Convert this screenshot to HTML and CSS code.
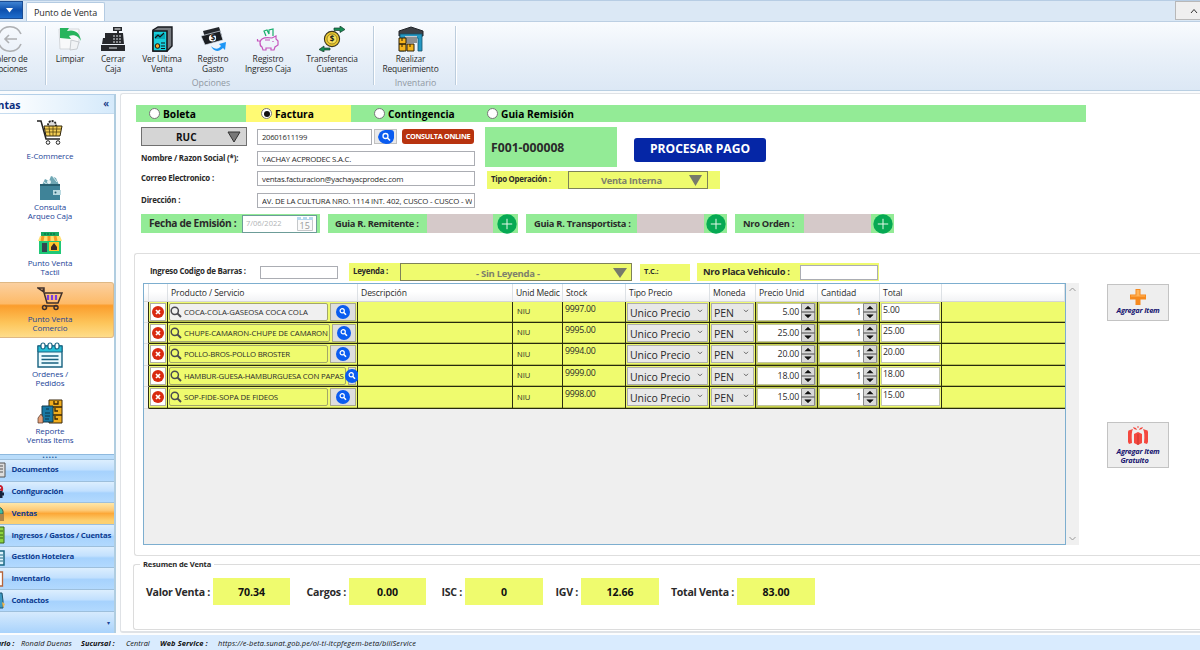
FILE: index.html
```html
<!DOCTYPE html>
<html lang="es">
<head>
<meta charset="utf-8">
<title>Punto de Venta</title>
<link rel="stylesheet" href="styles.css">
</head>
<body>
<svg class="defs" width="0" height="0">
  <symbol id="lens" viewBox="0 0 14 14"><circle cx="7" cy="7" r="7" fill="#0a5cf0"/><circle cx="6.2" cy="5.8" r="2.1" fill="none" stroke="#fff" stroke-width="1.2"/><path d="M7.8 7.4L10 9.8" stroke="#fff" stroke-width="1.5"/></symbol>
  <symbol id="del" viewBox="0 0 12 12"><circle cx="6" cy="6" r="6" fill="#d92a10"/><path d="M4 4l4 4M8 4l-4 4" stroke="#fff" stroke-width="1.7"/></symbol>
  <symbol id="find" viewBox="0 0 12 12"><circle cx="4.8" cy="4.8" r="3.6" fill="none" stroke="#4a4a50" stroke-width="1.5"/><path d="M7.4 7.4L11 11" stroke="#4a4a50" stroke-width="2"/></symbol>
  <symbol id="plus" viewBox="0 0 20 20"><circle cx="10" cy="10" r="9.7" fill="#06a953"/><path d="M10 4.8v10.4M4.8 10h10.4" stroke="#e4f8ea" stroke-width="1"/></symbol>
  <symbol id="spin" viewBox="0 0 14 18"><path d="M.5.5h13v17H.5z" fill="#d9d9d9" stroke="#8a8a8a"/><path d="M0 9h14" stroke="#707070" stroke-width="1.4"/><path d="M3.8 6.2L7 3.2l3.2 3M3.8 11.8L7 14.8l3.2-3z" fill="#111" stroke="#111" stroke-width=".6"/></symbol>
  <symbol id="chev" viewBox="0 0 6 4"><path d="M1 .8l2 2 2-2" fill="none" stroke="#555" stroke-width=".9"/></symbol>
</svg>

<header class="tabs">
  <div class="app"><svg width="7" height="5"><path d="M0 0h7L3.5 4.5z" fill="#fff"/></svg></div>
  <div class="tab">Punto de Venta</div>
  <div class="fold"><svg width="8" height="6" viewBox="0 0 8 6"><path d="M1 5l3-3.5L7 5" fill="none" stroke="#333"/></svg></div>
</header>

<nav class="ribbon">
  <section class="grp g0">
    <div class="tool t0"><svg width="26" height="26" viewBox="0 0 26 26" fill="none" stroke="#aeb0b3" stroke-width="1.6"><path d="M2 8a12 12 0 0 1 22 0M2 18a12 12 0 0 0 22 0M20 13H8M12 9l-4 4 4 4"/></svg><span>Tablero de<br><em>Opciones</em></span></div>
  </section>
  <section class="grp g1">
    <div class="tools">
      <div class="tool w46"><svg width="26" height="26" viewBox="0 0 26 26"><path d="M2 3h20v14l-5 6H3z" fill="#f8f9fa" stroke="#d5d8dc"/><path d="M14 14l8 2-2 7-7 1z" fill="#f1f3f5" stroke="#c8ccd0"/><path d="M3 2l9 0-2 3c7-2 13 1 14 10-2-4-6-7-12-5l2 3-11-1z" fill="#27b45c"/></svg><span>Limpiar</span></div>
      <div class="tool w40"><svg width="26" height="26" viewBox="0 0 26 26" fill="#26282c"><path d="M1 19h24v6H1zM3 12h7v-5h13l1 11H2z"/><path d="M13 1h9v4h-9zM17 5h2v3h-2zM5 7h5v6H5z"/><path d="M14.500 3h6" stroke="#fff"/><path d="M13 10h9M13 13h9M13 16h9" stroke="#e0e4e8" stroke-dasharray="2 1"/><path d="M9 22h8" stroke="#e0e4e8"/></svg><span>Cerrar<br>Caja</span></div>
      <div class="tool w58"><svg width="26" height="26" viewBox="0 0 26 26"><path d="M4 4l5-3h14v19l-5 5H4z" fill="#777b80" stroke="#16181c" stroke-width="1.4"/><path d="M4 5h14v20H4z" fill="#17cfdc" stroke="#16181c" stroke-width="1.6"/><path d="M6 8h10v5H6z" fill="#0ba7b6"/><path d="M6 12l3-3 2 2 4-4M12 17h4M12 20h4M12 22.500h4" fill="none" stroke="#111" stroke-width="1.2"/><circle cx="8.500" cy="20" r="2.300" fill="#f5a623" stroke="#111"/></svg><span>Ver Ultima<br>Venta</span></div>
      <div class="tool w44"><svg width="26" height="26" viewBox="0 0 26 26"><path d="M3 5l16-4 3 9-16 5z" fill="#24272c"/><path d="M1 10l19-5 3 9-18 5z" fill="#1b1d21" stroke="#dfe9f3" stroke-width=".7"/><circle cx="12.500" cy="12" r="3.600" fill="#fff"/><text x="10.700" y="15" class="coin">$</text><path d="M11 20c4 4 8 3 10 0l-2-2 7-2-1 8-2-2c-5 5-10 3-12-2z" fill="#1e96f5"/></svg><span>Registro<br>Gasto</span></div>
      <div class="tool w66"><svg width="26" height="26" viewBox="0 0 26 26" fill="none" stroke="#c655bd" stroke-width="1.2"><path d="M5 16c1-4 6-5 12-4l4-2v3l2 2v4l-3 2-1 3h-3v-2H11v2H8l-1-3c-2-1-2-2-2-5zM5 15H2.500v-2M10 14h5M18 15v1"/><path d="M11 10L9 5l3-1 2 4 0-4 4-1 0 7" stroke="#18ae6c"/></svg><span>Registro<br>Ingreso Caja</span></div>
      <div class="tool w62"><svg width="26" height="26" viewBox="0 0 26 26"><circle cx="13" cy="13" r="7.600" fill="#e9c72f" stroke="#3a3520" stroke-width="1.100"/><circle cx="13" cy="13" r="5" fill="#f9df57" stroke="#776419" stroke-width=".7"/><text x="10.800" y="16" class="coin">$</text><path d="M15 2h6V0l5 3.500-5 3V4.500h-6zM11 22H5v-2l-5 3.500 5 2.500v-2h6z" fill="#168c54" stroke="#193c2b" stroke-width=".7"/></svg><span>Transferencia<br>Cuentas</span></div>
    </div>
    <p class="cap">Opciones</p>
  </section>
  <section class="grp g2">
    <div class="tools"><div class="tool w72"><svg width="26" height="26" viewBox="0 0 26 26"><path d="M1 5l12-4 12 4v5H1z" fill="#3d4147" stroke="#202327"/><path d="M2 8h22v17h-4V12H6v13H2z" fill="#2497c2" stroke="#15506a" stroke-width=".8"/><path d="M7 10h12v7H7z" fill="#c6ccd0"/><path d="M7 12h12M7 14h12M7 16h12" stroke="#555"/><path d="M1 12h7v6H1zM1 18h7v7H1zM9 18h7v7H9z" fill="#f6b51d" stroke="#2b210b"/><path d="M4 12v3M4 18v3M12 18v3" stroke="#2b210b"/></svg><span>Realizar<br>Requerimiento</span></div></div>
    <p class="cap">Inventario</p>
  </section>
</nav>

<div class="body">
  <aside class="side">
    <h2 class="shead"><span>Ventas</span><b>«</b></h2>
    <div class="mods">
      <a class="mod m1"><svg width="26" height="26" viewBox="0 0 26 26"><circle cx="15" cy="6" r="4" fill="#ddd" stroke="#222" stroke-width="1.800" stroke-dasharray="2 1"/><path d="M7 7h18l-2 10H9z" fill="#f4ce55" stroke="#30260d"/><path d="M8 10h16M9 13h15M12 7l1 10M16 7v10M20 7l-1 10" stroke="#55440f" stroke-width=".8"/><path d="M0 2h4l5 18h14" fill="none" stroke="#222" stroke-width="1.500"/><circle cx="11" cy="23.500" r="1.800" fill="#fff" stroke="#222"/><circle cx="21" cy="23.500" r="1.800" fill="#fff" stroke="#222"/></svg><span>E-Commerce</span></a>
      <a class="mod m2"><svg width="26" height="26" viewBox="0 0 26 26"><path d="M5 10l3-6 4 2 2-5 5 2 3 7z" fill="#6fa7b4"/><circle cx="12" cy="7" r="2" fill="#e7f2f4"/><path d="M16 2l4 5M7 7l4 3" stroke="#d9eef2"/><path d="M3 10h20v15H3z" fill="#3f8398"/><path d="M3 10h20" stroke="#275f70" stroke-width="2"/><path d="M16 15h8v5h-8z" fill="#b9d9e0"/><circle cx="18.500" cy="17.500" r="1" fill="#275f70"/></svg><span>Consulta<br>Arqueo Caja</span></a>
      <a class="mod m3"><svg width="24" height="24" viewBox="0 0 24 24"><path d="M1 9h22v14H1z" fill="#1fc877"/><path d="M3 1h18v4H3z" fill="#17a861"/><path d="M6 3h12" stroke="#0a5d36" stroke-dasharray="2 1"/><path d="M2 5h20l2 5H0z" fill="#ffdf70"/><path d="M5 5l-1 5M11 5v5M17 5l1 5" stroke="#f59a23" stroke-width="3"/><path d="M4 12h5v9H4z" fill="#33474f"/><path d="M11 11h10v9H11z" fill="#ffc82c"/><path d="M13 19v-3l3-4 3 4v3z" fill="#3a2b2b"/></svg><span>Punto Venta<br>Tactil</span></a>
      <a class="mod m4"><svg width="26" height="26" viewBox="0 0 26 26" fill="none" stroke="#40302b" stroke-width="1.500"><path d="M1 2h6v4L1 2zM6 3l4 14h11l4-10H8"/><path d="M11 9v5M15 9v5M19 9v5" stroke="#7a3ce0" stroke-width="2.200"/><path d="M8 20h12"/><circle cx="7.500" cy="21.500" r="2"/><circle cx="19" cy="21.500" r="2"/></svg><span>Punto Venta<br>Comercio</span></a>
      <a class="mod m5"><svg width="26" height="26" viewBox="0 0 26 26"><path d="M1 4h24v21H1z" fill="#eafbff" stroke="#176280" stroke-width="1.400"/><path d="M1 4h24v6H1z" fill="#26c0d8" stroke="#176280"/><path d="M4.500 14h17M4.500 17.500h17M4.500 21h17" stroke="#176280" stroke-width="1.400"/><g fill="#fff" stroke="#176280" stroke-width="1.200"><rect x="4" y="1" width="4" height="6" rx="2"/><rect x="11" y="1" width="4" height="6" rx="2"/><rect x="18" y="1" width="4" height="6" rx="2"/></g></svg><span>Ordenes /<br>Pedidos</span></a>
      <a class="mod m6"><svg width="26" height="26" viewBox="0 0 26 26"><path d="M12 1h13v23H12z" fill="#f2ae1c" stroke="#38270a"/><path d="M12 8h13M12 16h13M17 2v3h4V2M18 9v3h3M18 17v3h3" fill="none" stroke="#38270a" stroke-width="1.300"/><path d="M5 7h11v16H5z" fill="#1879a5" stroke="#123a4d"/><path d="M8 14h5M8 17h5M8 20h4M9 10h3" stroke="#0c3345"/><path d="M1 19l3-4 2 3v6H1z" fill="#e5a079" stroke="#4b3022" stroke-width=".7"/></svg><span>Reporte<br>Ventas Items</span></a>
    </div>
    <div class="grip">·····</div>
    <ul class="nav">
      <li><svg width="6" height="16"><path d="M-2 1h7v14h-7z" fill="#ddd" stroke="#555"/><path d="M0 4h3M0 7h3M0 10h3" stroke="#555"/></svg>Documentos</li>
      <li><svg width="6" height="16"><path d="M-3 3q6-3 5 3l-5-1" fill="none" stroke="#c8202e" stroke-width="2"/><path d="M-1 10h5M1 7v7" stroke="#17233b" stroke-width="3"/></svg>Configuración</li>
      <li class="on"><svg width="6" height="16"><path d="M-2 1q6 1 5 7h-5z" fill="#42bda4" stroke="#365b52"/><path d="M-1 8h5v7h-5z" fill="#ad854b"/></svg>Ventas</li>
      <li><svg width="6" height="18"><path d="M-2 1h6v16h-6z" fill="#8dd33f" stroke="#37621d"/><path d="M0 5h3M0 9h3M0 12h3" stroke="#37621d"/></svg>Ingresos / Gastos / Cuentas</li>
      <li><svg width="6" height="17"><path d="M-2 2h6v14h-6z" fill="#dff3fb" stroke="#196783" stroke-width="1.500"/><path d="M0 6h3M0 9h3M0 12h3" stroke="#196783"/></svg>Gestión Hotelera</li>
      <li><svg width="6" height="16"><path d="M-3 1h5.500v14H-3z" fill="#fff" stroke="#b6643a" stroke-width="1.300"/></svg>Inventario</li>
      <li><svg width="6" height="17"><path d="M-2 1h4l1 8v7h-5z" fill="#3e9ac2" stroke="#1d536c"/><path d="M2 10l3 2-2 4" fill="#f2b84b"/></svg>Contactos</li>
    </ul>
    <div class="more">▾</div>
  </aside>

  <main class="main">
    <div class="types">
      <label class="ty a"><i></i>Boleta</label><label class="ty b on"><i></i>Factura</label><label class="ty c"><i></i>Contingencia</label><label class="ty d"><i></i>Guia Remisión</label>
    </div>

    <div class="form">
      <div class="client">
        <div class="r1">
          <div class="ruc"><span>RUC</span><svg width="14" height="12" viewBox="0 0 14 12"><path d="M1 1h12L7 11z" fill="#777" stroke="#333"/></svg></div>
          <div class="in num">20601611199</div>
          <div class="lbtn"><svg width="16" height="14" viewBox="0 0 16 14"><path d="M7 0h6q3 0 3 3v5q-1 6-8 6-7-1-8-7 1-6 7-7z" fill="#0a5cf0"/><circle cx="7.500" cy="6" r="2.500" fill="none" stroke="#fff" stroke-width="1.300"/><path d="M9.500 8l2.500 2.500" stroke="#fff" stroke-width="1.600"/></svg></div>
          <div class="online">CONSULTA ONLINE</div>
        </div>
        <div class="rf f2"><b>Nombre / Razon Social (*):</b><div class="in nom">YACHAY ACPRODEC S.A.C.</div></div>
        <div class="rf f3"><b>Correo Electronico :</b><div class="in cor">ventas.facturacion@yachayacprodec.com</div></div>
        <div class="rf f4"><b>Dirección :</b><div class="in dir"><p>AV. DE LA CULTURA NRO. 1114 INT. 402, CUSCO - CUSCO - WANCHAQ</p></div></div>
      </div>
      <div class="doc">
        <div class="dtop"><div class="serie">F001-000008</div><div class="pay">PROCESAR PAGO</div></div>
        <div class="oper"><b>Tipo Operación :</b><div class="combo"><span>Venta Interna</span><svg width="13" height="11"><path d="M0 0h13L6.500 11z" fill="#777b6b"/></svg></div></div>
      </div>
    </div>

    <div class="guides">
      <div class="gd e1"><b>Fecha de Emisión :</b><div class="date"><span>7/06/2022</span><svg width="16" height="15" viewBox="0 0 16 15"><path d="M.5 2.500h15v12H.5z" fill="#fafafa" stroke="#c5c8ca"/><path d="M0 1h16v3H0z" fill="#b5d8ee"/><path d="M5 0v3M11 0v3" stroke="#fff" stroke-width="2"/><text x="2.500" y="13" class="day">15</text></svg></div></div>
      <div class="gd e2"><b>Guia R. Remitente :</b><i></i><svg width="20" height="20"><use href="#plus"/></svg></div>
      <div class="gd e3"><b>Guia R. Transportista :</b><i></i><svg width="20" height="20"><use href="#plus"/></svg></div>
      <div class="gd e4"><b>Nro Orden :</b><i></i><svg width="20" height="20"><use href="#plus"/></svg></div>
    </div>

    <section class="items">
      <div class="left">
        <div class="opts">
          <b class="bar">Ingreso Codigo de Barras :</b><div class="in bin"></div>
          <div class="ley"><b>Leyenda :</b><div class="combo"><span>- Sin Leyenda -</span><svg width="14" height="10"><path d="M0 0h14L7 10z" fill="#777b6b"/></svg></div></div>
          <div class="tc">T.C.:</div>
          <div class="placa"><b>Nro Placa Vehiculo :</b><div class="in"></div></div>
        </div>
        <div class="tw">
          <div class="table">
            <div class="tr th"><div></div><div></div><div>Producto / Servicio</div><div>Descripción</div><div class="um">Unid Medic</div><div>Stock</div><div>Tipo Precio</div><div>Moneda</div><div>Precio Unid</div><div>Cantidad</div><div>Total</div><div></div></div>
            <div class="tr"><div class="rh"></div><div class="x"><i><svg width="12" height="12"><use href="#del"/></svg></i></div><div class="pr"><p class="off"><svg width="12" height="12"><use href="#find"/></svg><span class="s1">COCA-COLA-GASEOSA COCA COLA</span></p><i><svg width="14" height="14"><use href="#lens"/></svg></i></div><div></div><div class="ni">NIU</div><div class="st">9997.00</div><div class="sel"><i>Unico Precio<svg width="6" height="4"><use href="#chev"/></svg></i></div><div class="sel"><i>PEN<svg width="6" height="4"><use href="#chev"/></svg></i></div><div class="sp"><i>5.00<svg width="14" height="18"><use href="#spin"/></svg></i></div><div class="sp"><i>1<svg width="14" height="18"><use href="#spin"/></svg></i></div><div class="to"><i>5.00</i></div><div></div></div>
            <div class="tr"><div class="rh"></div><div class="x"><i><svg width="12" height="12"><use href="#del"/></svg></i></div><div class="pr wide"><p><svg width="12" height="12"><use href="#find"/></svg><span class="s2">CHUPE-CAMARON-CHUPE DE CAMARON</span></p><i><svg width="14" height="14"><use href="#lens"/></svg></i></div><div></div><div class="ni">NIU</div><div class="st">9995.00</div><div class="sel"><i>Unico Precio<svg width="6" height="4"><use href="#chev"/></svg></i></div><div class="sel"><i>PEN<svg width="6" height="4"><use href="#chev"/></svg></i></div><div class="sp"><i>25.00<svg width="14" height="18"><use href="#spin"/></svg></i></div><div class="sp"><i>1<svg width="14" height="18"><use href="#spin"/></svg></i></div><div class="to"><i>25.00</i></div><div></div></div>
            <div class="tr t"><div class="rh"></div><div class="x"><i><svg width="12" height="12"><use href="#del"/></svg></i></div><div class="pr"><p><svg width="12" height="12"><use href="#find"/></svg><span class="s3">POLLO-BROS-POLLO BROSTER</span></p><i><svg width="14" height="14"><use href="#lens"/></svg></i></div><div></div><div class="ni">NIU</div><div class="st">9994.00</div><div class="sel"><i>Unico Precio<svg width="6" height="4"><use href="#chev"/></svg></i></div><div class="sel"><i>PEN<svg width="6" height="4"><use href="#chev"/></svg></i></div><div class="sp"><i>20.00<svg width="14" height="18"><use href="#spin"/></svg></i></div><div class="sp"><i>1<svg width="14" height="18"><use href="#spin"/></svg></i></div><div class="to"><i>20.00</i></div><div></div></div>
            <div class="tr"><div class="rh"></div><div class="x"><i><svg width="12" height="12"><use href="#del"/></svg></i></div><div class="pr full"><p><svg width="12" height="12"><use href="#find"/></svg><span class="s4">HAMBUR-GUESA-HAMBURGUESA CON PAPAS</span></p><i><svg width="14" height="14"><use href="#lens"/></svg></i></div><div></div><div class="ni">NIU</div><div class="st">9999.00</div><div class="sel"><i>Unico Precio<svg width="6" height="4"><use href="#chev"/></svg></i></div><div class="sel"><i>PEN<svg width="6" height="4"><use href="#chev"/></svg></i></div><div class="sp"><i>18.00<svg width="14" height="18"><use href="#spin"/></svg></i></div><div class="sp"><i>1<svg width="14" height="18"><use href="#spin"/></svg></i></div><div class="to"><i>18.00</i></div><div></div></div>
            <div class="tr t"><div class="rh"></div><div class="x"><i><svg width="12" height="12"><use href="#del"/></svg></i></div><div class="pr"><p><svg width="12" height="12"><use href="#find"/></svg><span class="s5">SOP-FIDE-SOPA DE FIDEOS</span></p><i><svg width="14" height="14"><use href="#lens"/></svg></i></div><div></div><div class="ni">NIU</div><div class="st">9998.00</div><div class="sel"><i>Unico Precio<svg width="6" height="4"><use href="#chev"/></svg></i></div><div class="sel"><i>PEN<svg width="6" height="4"><use href="#chev"/></svg></i></div><div class="sp"><i>15.00<svg width="14" height="18"><use href="#spin"/></svg></i></div><div class="sp"><i>1<svg width="14" height="18"><use href="#spin"/></svg></i></div><div class="to"><i>15.00</i></div><div></div></div>
          </div>
          <div class="scroll"><svg width="7" height="5"><path d="M.5 4l3-3 3 3" fill="none" stroke="#999"/></svg><svg width="7" height="5"><path d="M.5 1l3 3 3-3" fill="none" stroke="#999"/></svg></div>
        </div>
      </div>
      <div class="acts">
        <div class="act a1"><svg width="16" height="16"><path d="M5.500 0h5v5.500H16v5h-5.500V16h-5v-5.500H0v-5h5.500z" fill="#f68a1e"/><path d="M6.500 1h3v5.500H15v1H1v-1h5.500z" fill="#ffb45a"/></svg><span>Agregar Item</span></div>
        <div class="act a2"><svg width="20" height="20" viewBox="0 0 20 20" fill="#f4483f"><path d="M0 6q0-2 2-2l3-1q-2 3-1 14l-3 1-1-2zM20 6q0-2-2-2l-3-1q2 3 1 14l3 1 1-2zM6 8l4-2 4 2v9l-4 2-4-2z"/><path d="M9 4L6 3l-1-2 3 1zM11 4l3-1 1-2-3 1zM9.500 0h1v2h-1z"/><path d="M10 8v11" stroke="#c8372f"/></svg><span>Agregar Item<br><em>Gratuito</em></span></div>
      </div>
    </section>

    <section class="sum">
      <h3>Resumen de Venta</h3>
      <div class="vals"><b>Valor Venta :</b><i>70.34</i><b>Cargos :</b><i>0.00</i><b>ISC :</b><i>0</i><b>IGV :</b><i>12.66</i><b>Total Venta :</b><i>83.00</i></div>
    </section>
  </main>
</div>

<footer class="status"><b class="u0">Usuario :</b><span class="u1">Ronald Duenas</span><b class="u2">Sucursal :</b><span class="u3">Central</span><b class="u4">Web Service :</b><span class="u5">https://e-beta.sunat.gob.pe/ol-ti-itcpfegem-beta/billService</span></footer>
</body>
</html>
```
FILE: styles.css
```css
* { box-sizing: border-box; margin: 0; padding: 0; }
body { width: 1200px; height: 650px; overflow: hidden; background: #fcfdfe; font-family: "Open Sans", "Noto Sans", sans-serif; font-size: 8px; line-height: 1; color: #2a2a2a; display: flex; flex-direction: column; }
i { font-style: normal; }
em { font-style: inherit; }
svg { display: block; flex: none; }
.defs { position: absolute; }
b, span { white-space: nowrap; }
.coin { font: bold 8px "Open Sans"; fill: #222; }
.day { font: 9px "Open Sans"; fill: #999; }

.tabs { height: 21px; flex: none; background: #dbe8f5; border-top: 1px solid #b7cde4; display: flex; }
.app { width: 23px; height: 18px; background: linear-gradient(#3f83d2, #0d50ae 50%, #1f6dcc); border: 1px solid #1b4d94; border-left: 0; display: flex; align-items: center; padding-left: 6px; }
.tab { margin: 1px 0 0 3px; width: 79px; height: 20px; background: #fff; border: 1px solid #b4cbe2; border-bottom: 0; border-radius: 2px 2px 0 0; text-align: center; padding-top: 5px; font-size: 9px; letter-spacing: -.1px; }
.fold { margin-left: auto; width: 25px; height: 19px; background: #efefef; border: 1px solid #b8b8b8; border-right: 0; display: flex; align-items: center; padding-left: 14px; }

.ribbon { height: 70px; flex: none; border-top: 1px solid #bccfe3; border-bottom: 1px solid #b9cfe2; background: linear-gradient(#f9fbfe, #eaf1f9 45%, #dce8f5); display: flex; padding-top: 4px; }
.grp { height: 59px; border-right: 1px solid #bccddd; box-shadow: 1px 0 #fff; }
.g0 { width: 46px; }
.g1 { width: 328px; padding-left: 1px; }
.g2 { width: 82px; }
.tools { display: flex; height: 51px; }
.g2 .tools { justify-content: center; padding-right: 8px; }
.tool { display: flex; flex-direction: column; align-items: center; text-align: center; }
.tool span { font-size: 8.400px; line-height: 10px; margin-top: 2px; letter-spacing: -.15px; }
.t0 { width: 60px; margin-left: -20px; }
.t0 span { margin-right: 5px; }
.t0 em { padding-left: 4px; }
.w46 { width: 46px; } .w40 { width: 40px; } .w58 { width: 58px; } .w44 { width: 44px; } .w66 { width: 66px; } .w62 { width: 62px; } .w72 { width: 72px; }
.cap { text-align: center; color: #9098a2; font-size: 8.800px; padding: 2px 0 0 2px; }

.body { height: 542px; flex: none; display: flex; background: #f9fbfd; }
.side { width: 116px; margin-top: 3px; height: 539px; border-right: 2px solid #b0cde0; border-top: 1px solid #b3cfe8; background: #fff; display: flex; flex-direction: column; }
.shead { height: 19px; flex: none; background: linear-gradient(90deg, #fff, #d5eafb); border-bottom: 1px solid #c6dcef; display: flex; justify-content: space-between; padding: 5px 5px 0 0; font-size: 10.500px; color: #0b2f80; overflow: hidden; }
.shead span { margin-left: -15.500px; }
.shead b { margin-top: -2px; font-weight: 600; }
.mods { height: 340px; overflow: hidden; }
.mod { display: flex; flex-direction: column; align-items: center; text-align: center; color: #1c4498; padding-right: 14px; }
.mod span { font-size: 8px; line-height: 9.300px; letter-spacing: -.1px; }
.m1 { height: 61px; padding-top: 5px; } .m1 span { margin-top: 6px; }
.m2 { height: 53px; } .m2 span { margin-top: 1px; }
.m3 { height: 54px; padding-top: 3px; } .m3 span { margin-top: 3px; }
.m4 { height: 56px; padding-top: 3px; background: linear-gradient(#fbd0a0, #fdba68 38%, #fb9d2c 42%, #fdc65c 75%, #fedd8a); border: 1px solid #dfb884; border-left: 0; border-radius: 0 3px 3px 0; padding-right: 13px; }
.m4 span { margin-top: 2px; }
.m5 { height: 57px; padding-top: 4px; } .m5 span { margin-top: 1px; }
.m6 { padding-top: 4px; } .m6 span { margin-top: 1px; }
.grip { height: 5px; flex: none; background: #b9dcfa; border-top: 1px solid #8eb9de; color: #28609f; font-weight: bold; font-size: 9px; line-height: 3px; letter-spacing: .5px; text-align: center; padding-right: 14px; }
.nav { list-style: none; }
.nav li { height: 21.700px; border-top: 1px solid #9dbfdc; background: linear-gradient(#dceefe, #c2e0fe 45%, #a6d2fd 55%, #b2d9fe); display: flex; align-items: center; color: #0d3c91; font-weight: bold; font-size: 7.800px; letter-spacing: -.22px; white-space: nowrap; }
.nav svg { margin-right: 5.500px; overflow: hidden; }
.nav .on { background: linear-gradient(#fee7a9, #fdc975 35%, #fca838 50%, #fdd070 85%); }
.more { flex: 1; border-top: 1px solid #9dbfdc; background: linear-gradient(#d6eafd, #a9d3fc); color: #1c4498; font-size: 6px; text-align: right; padding: 8px 4px 0 0; }

.main { width: 1080px; margin: 2px 0 0 4px; height: 540px; border: 1px solid #dfe2e6; border-width: 1px 0 2px 1px; border-radius: 3px 0 0 3px; background: #fff; padding-top: 11px; flex: none; }
.types { margin-left: 15px; width: 950px; height: 17px; background: #93eb96; display: flex; }
.ty { display: flex; align-items: center; color: #000; font-weight: bold; font-size: 10.200px; gap: 3px; white-space: nowrap; padding-top: 1px; }
.ty i { width: 11px; height: 11px; margin-top: -1px; border: 1px solid #777; border-radius: 50%; background: #fff; display: grid; place-items: center; }
.ty.on i::after { content: ""; width: 6px; height: 6px; border-radius: 50%; background: #111; }
.ty.a { width: 110px; padding-left: 13px; }
.ty.b { width: 105px; padding-left: 15px; background: #fffa73; }
.ty.c { width: 113px; padding-left: 23px; }
.ty.d { padding-left: 23px; }

.form { margin: 5px 0 0 20px; display: flex; height: 81px; }
.client { width: 344px; }
.in { background: #fff; border: 1px solid #abadb3; white-space: nowrap; overflow: hidden; font-size: 7.800px; padding: 4px 0 0 4px; }
.r1 { display: flex; height: 19px; align-items: center; }
.ruc { width: 106px; height: 19px; border: 1px solid #707070; background: #d5d5d5; display: flex; align-items: center; padding: 0 5px 0 34px; justify-content: space-between; font-weight: bold; font-size: 10px; color: #111; }
.num { width: 115px; height: 16px; margin-left: 10px; font-size: 7.600px; letter-spacing: -.25px; }
.lbtn { width: 23px; height: 15px; margin-left: 2px; border: 1px solid #c0c0c0; background: #e9e9e9; display: grid; place-items: center; }
.online { margin-left: 5px; width: 72px; height: 15px; border-radius: 3px; background: #b8330f; color: #fff; font-weight: bold; font-size: 7.300px; letter-spacing: -.33px; display: grid; place-items: center; white-space: nowrap; }
.rf { display: flex; height: 15px; align-items: center; margin-top: 5px; }
.rf b { width: 116px; font-size: 7.900px; letter-spacing: -.2px; }
.rf .in { width: 218px; height: 15px; padding-left: 4px; }
.f4 { margin-top: 7px; }
.nom { letter-spacing: -.22px; }
.cor { letter-spacing: -.24px; }
.rf .dir { letter-spacing: -.17px; padding-right: 2px; }
.dir p { overflow: hidden; height: 9px; margin-top: -1px; padding-top: 1px; }
.dtop { display: flex; height: 40px; align-items: center; }
.serie { width: 132px; height: 40px; background: #93eb96; font-weight: bold; font-size: 12.200px; display: flex; align-items: center; padding: 3px 0 0 6px; }
.pay { margin: 5px 0 0 17px; width: 132px; height: 24px; border-radius: 3px; background: #0526a6; color: #fff; font-weight: bold; font-size: 12.100px; display: grid; place-items: center; white-space: nowrap; }
.oper { margin: 4px 0 0 2px; width: 233px; height: 18px; background: #effb6e; display: flex; }
.oper b { width: 81px; padding: 5px 0 0 4px; font-size: 7.900px; letter-spacing: -.27px; }
.combo { border: 1.500px solid #7e8258; display: flex; align-items: center; color: #7d806c; font-weight: bold; font-size: 9.300px; letter-spacing: -.28px; background: #effb6e; }
.combo span { padding-top: 2px; }
.oper .combo { width: 140px; padding: 0 5px 0 32px; justify-content: space-between; }

.guides { display: flex; margin: 6px 0 0 20px; height: 19px; }
.gd { background: #93eb96; display: flex; align-items: center; height: 19px; font-size: 9.300px; letter-spacing: -.27px; }
.gd > i { background: #d5c9c9; height: 19px; }
.gd > svg { margin-left: auto; margin-right: 1px; }
.e1 { width: 179px; padding-left: 8px; font-size: 10.200px; letter-spacing: -.32px; }
.e1 b { width: 93px; }
.date { width: 75px; height: 18px; background: #fff; border: 1px solid #6c9c98; display: flex; justify-content: space-between; align-items: center; padding: 0 3px; color: #b0b3b5; font-size: 7.500px; letter-spacing: 0; }
.e2 { width: 190px; margin-left: 8px; padding-left: 7px; } .e2 b { width: 92px; } .e2 i { width: 66px; }
.e3 { width: 201px; margin-left: 8px; padding-left: 8px; } .e3 b { width: 103px; } .e3 i { width: 67px; }
.e4 { width: 159px; margin-left: 8px; padding-left: 8px; } .e4 b { width: 61px; } .e4 i { width: 67px; }

.items { margin: 20px 0 0 13px; height: 303px; border: 1px solid #dedede; border-width: 1px 0 1px 1px; border-radius: 3px 0 0 3px; display: flex; }
.left { width: 945px; padding: 9px 0 0 7px; }
.opts { display: flex; height: 18px; align-items: center; margin-left: 8px; }
.bar { width: 110px; font-size: 7.900px; letter-spacing: -.24px; }
.bin { width: 78px; height: 13px; margin-top: 1px; }
.ley { margin-left: 11px; width: 283px; height: 18px; background: #effb6e; display: flex; align-items: center; }
.ley b { width: 51px; padding-left: 4px; font-size: 7.900px; letter-spacing: -.28px; }
.ley .combo { width: 232px; height: 18px; padding: 1px 4px 0 75px; justify-content: space-between; font-size: 9.500px; }
.tc { margin-left: 8px; width: 50px; height: 17px; background: #effb6e; font-weight: bold; font-size: 7.500px; padding: 4px 0 0 4px; letter-spacing: -.2px; }
.placa { margin-left: 7px; width: 182px; height: 18px; background: #effb6e; display: flex; align-items: center; padding-left: 6px; font-size: 9.300px; letter-spacing: -.27px; }
.placa b { width: 97px; }
.placa .in { width: 78px; height: 15px; }
.tw { display: flex; margin: 2px 0 0 1px; height: 262px; }
.table { width: 923px; border: 1px solid #7daecf; background: #efefef; }
.scroll { width: 13px; background: #f0f0f0; display: flex; flex-direction: column; justify-content: space-between; align-items: center; padding: 4px 0; }
.tr { display: grid; grid-template-columns: 5px 19px 190px 155px 50px 63px 84px 46px 62px 62px 62px 1fr; grid-template-rows: 100%; height: 21px; }
.tr.t { height: 22px; }
.tr > div { border-right: 1px solid #2b2e12; border-bottom: 1px solid #26290e; box-shadow: inset 0 -1px rgba(60, 64, 10, .3); background: #effb6e; display: flex; min-width: 0; }
.tr > div:last-child { border-right: 0; }
.tr > .rh { background: #f4f4f4; border-bottom-color: #ddd; box-shadow: none; }
.tr.th { height: 18px; font-size: 8.600px; letter-spacing: -.1px; }
.tr.th > div { background: linear-gradient(#fff, #fff 45%, #f2f3f5); border-right: 1px solid #dde1e5; border-bottom: 1px solid #d5d5d5; box-shadow: none; align-items: center; padding: 1px 0 0 3px; white-space: nowrap; overflow: hidden; }
.tr.th > .um { letter-spacing: -.15px; }
.x { padding: 1px; }
.x i { background: #fff; border: 1px solid #b0b0a0; width: 16px; height: 18px; display: grid; place-items: center; }
.pr { padding: 1px; gap: 2px; }
.pr p { width: 159px; height: 18px; border: 1px solid #a2a66a; border-radius: 2px; display: flex; align-items: center; gap: 2px; padding-left: 0; font-size: 7.800px; flex: none; }
.pr p.off { background: #f0f0f0; }
.pr p span { padding-top: 2px; }
.s1 { letter-spacing: -.05px; } .s2 { letter-spacing: -.1px; } .s3 { letter-spacing: -.2px; } .s4 { letter-spacing: -.18px; } .s5 { letter-spacing: -.12px; }
.pr > i { flex: 1; height: 18px; border: 1px solid #a8a88e; background: #dedede; display: grid; place-items: center; min-width: 0; }
.wide p { width: 161px; } .full p { width: 177px; }
.full > i { justify-content: center; }
.full > i svg { margin: 0 -4px; }
.ni { align-items: center; padding-left: 4px; font-size: 7.600px; }
.st { padding: 3px 0 0 2px; font-size: 8.800px; letter-spacing: -.3px; }
.sel { padding: 1px; }
.sel i { flex: 1; height: 18px; border: 1px solid #adadad; background: #e8e8e8; display: flex; align-items: center; justify-content: space-between; padding: 2px 4px 0 2px; font-size: 10.500px; letter-spacing: -.08px; white-space: nowrap; }
.sel svg { margin-top: -4px; }
.sp { padding: 1px; }
.tr > .sp { background: #c9d34f; }
.sp i { flex: 1; height: 18px; background: #fff; border: 1px solid #c2c6a0; display: flex; align-items: center; justify-content: flex-end; gap: 2px; font-size: 8.800px; letter-spacing: -.2px; }
.to { padding: 1px; }
.to i { flex: 1; height: 18px; background: #fff; border: 1px solid #c2c6b0; padding: 2px 0 0 1px; font-size: 8.800px; letter-spacing: -.2px; }
.acts { padding: 30px 0 0 27px; }
.act { width: 62px; border: 1px solid #c3c3c3; background: #eee; display: flex; flex-direction: column; align-items: center; color: #16146f; font-weight: bold; font-style: italic; font-size: 7.400px; line-height: 9px; letter-spacing: -.2px; }
.a1 { height: 37px; padding-top: 4px; } .a1 span { margin-top: 1px; }
.a2 { height: 46px; margin-top: 101px; padding-top: 3px; } .a2 span { margin-top: 1px; }
.a2 em { padding-left: 4px; }

.sum { margin: 8px 0 0 12px; height: 66px; border: 1px solid #dcdcdc; border-width: 1px 0 1px 1px; border-radius: 3px 0 0 3px; }
.sum h3 { background: #fff; width: 74px; margin: -4px 0 0 6px; padding-left: 3px; font-size: 7.600px; height: 8px; white-space: nowrap; letter-spacing: -.16px; }
.vals { display: grid; grid-template-columns: 67px 77px 59px 77px 39px 78px 38px 78px 78px 78px; height: 27px; margin: 9px 0 0 12px; font-size: 10.600px; }
.vals > * { display: flex; align-items: center; white-space: nowrap; padding-top: 2px; }
.vals b { justify-content: flex-end; padding-right: 3px; letter-spacing: -.27px; }
.vals i { justify-content: center; background: #effb6e; font-weight: bold; color: #111; }

.status { margin-top: 2px; height: 15px; background: #d9ebfe; display: flex; align-items: center; padding-top: 2px; font-size: 7.400px; font-style: italic; color: #111; }
.u0 { width: 37px; margin-left: -16px; letter-spacing: -.1px; }
.u1 { width: 60px; letter-spacing: .1px; } .u2 { width: 45px; } .u3 { width: 34px; } .u4 { width: 58px; letter-spacing: .15px; } .u5 { letter-spacing: .14px; }
```
